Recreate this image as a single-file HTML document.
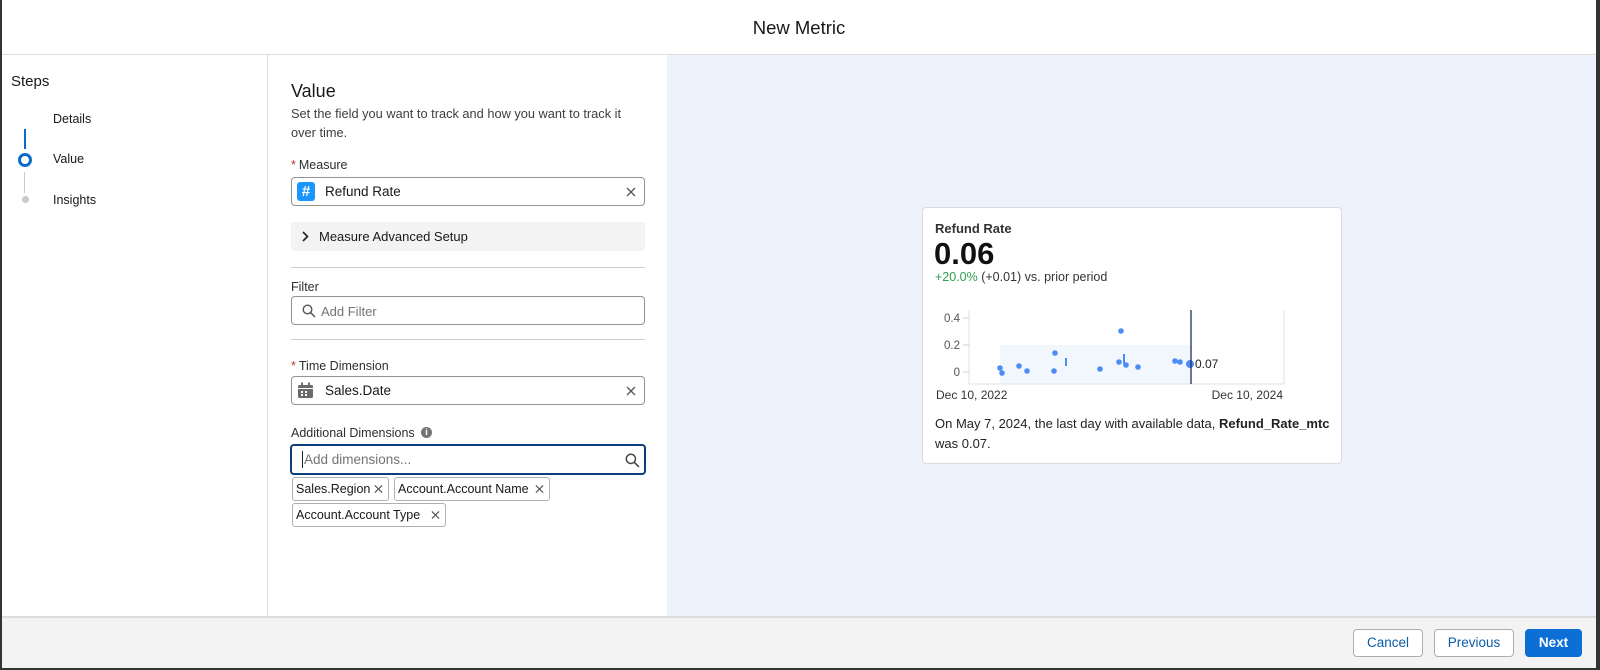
<!DOCTYPE html>
<html><head><meta charset="utf-8"><style>
*{box-sizing:border-box;margin:0;padding:0}
body{width:1600px;height:670px;overflow:hidden;background:#fff;font-family:"Liberation Sans",Arial,sans-serif;color:#181818;position:relative}
.a{position:absolute}
.lbl{font-size:12.5px;color:#2e2e2e}
.req{color:#c23934;margin-right:3px}
.box{position:absolute;left:291px;width:354px;border:1px solid #939393;border-radius:4px;background:#fff}
.pill{position:absolute;height:24px;border:1px solid #b0b0b0;border-radius:3px;font-size:12.5px;line-height:22px;padding-left:3px;background:#fff;white-space:nowrap}
.x{position:absolute;right:8px;top:50%;transform:translateY(-50%)}
.pill .x{right:5px}
.btn{position:absolute;top:629px;height:28px;border:1px solid #aeaeae;border-radius:4px;background:#fff;color:#0b5cab;font-size:13.5px;text-align:center;line-height:26px}
</style></head><body>
<div class="a" style="left:0;top:0;width:2px;height:670px;background:#333"></div>
<div class="a" style="left:1596px;top:0;width:4px;height:670px;background:#333"></div>
<div class="a" style="left:0;top:668px;width:1600px;height:2px;background:#333"></div>
<div class="a" style="left:2px;top:0;width:1594px;height:55px;border-bottom:1px solid #ddd;text-align:center;font-size:18.5px;line-height:56px;color:#181818">New Metric</div>
<div class="a" style="left:267px;top:55px;width:1px;height:561px;background:#ddd"></div>
<div class="a" style="left:11px;top:73px;font-size:15px">Steps</div>
<div class="a" style="left:53px;top:112px;font-size:12.5px">Details</div>
<div class="a" style="left:53px;top:152px;font-size:12.5px">Value</div>
<div class="a" style="left:53px;top:193px;font-size:12.5px">Insights</div>
<div class="a" style="left:24px;top:129px;width:2px;height:20px;background:#0b6bcb"></div>
<div class="a" style="left:18px;top:153px;width:14px;height:14px;border:3px solid #0b6bcb;border-radius:50%"></div>
<div class="a" style="left:24px;top:172px;width:1px;height:21px;background:#c9c9c9"></div>
<div class="a" style="left:22px;top:196px;width:7px;height:7px;border-radius:50%;background:#c9c9c9"></div>
<div class="a" style="left:291px;top:81px;font-size:18px">Value</div>
<div class="a" style="left:291px;top:104px;width:345px;font-size:12.8px;line-height:19px;color:#3e3e3c">Set the field you want to track and how you want to track it over time.</div>
<div class="a lbl" style="left:291px;top:158px"><span class="req">*</span>Measure</div>
<div class="box" style="top:177px;height:29px">
 <div class="a" style="left:5px;top:4px;width:18px;height:19px;background:#1b96ff;border-radius:3px;color:#fff;font-weight:bold;font-size:15px;line-height:19px;text-align:center">#</div>
 <div class="a" style="left:33px;top:6px;font-size:13.5px">Refund Rate</div>
 <svg class="x" width="10" height="10" viewBox="0 0 10 10"><path d="M1 1L9 9M9 1L1 9" stroke="#555" stroke-width="1.3"/></svg>
</div>
<div class="a" style="left:291px;top:222px;width:354px;height:29px;background:#f3f3f3;border-radius:3px">
 <svg class="a" style="left:11px;top:9px" width="7" height="11" viewBox="0 0 7 11"><path d="M1 1L5.5 5.5L1 10" stroke="#222" stroke-width="1.6" fill="none"/></svg>
 <div class="a" style="left:28px;top:7px;font-size:13px">Measure Advanced Setup</div>
</div>
<div class="a" style="left:291px;top:267px;width:354px;height:1px;background:#ccc"></div>
<div class="a lbl" style="left:291px;top:280px">Filter</div>
<div class="box" style="top:296px;height:29px">
 <svg class="a" style="left:10px;top:7px" width="14" height="14" viewBox="0 0 14 14"><circle cx="5.5" cy="5.5" r="4.3" stroke="#555" stroke-width="1.4" fill="none"/><path d="M8.7 8.7L13 13" stroke="#555" stroke-width="1.5"/></svg>
 <div class="a" style="left:29px;top:7px;font-size:13px;color:#747474">Add Filter</div>
</div>
<div class="a" style="left:291px;top:339px;width:354px;height:1px;background:#ccc"></div>
<div class="a lbl" style="left:291px;top:359px"><span class="req">*</span>Time Dimension</div>
<div class="box" style="top:376px;height:29px">
 <svg class="a" style="left:5px;top:5px" width="17" height="17" viewBox="0 0 17 17"><rect x="1" y="3" width="15" height="13" rx="1.5" fill="#6b6b6b"/><rect x="4" y="0.5" width="2" height="4" fill="#6b6b6b"/><rect x="11" y="0.5" width="2" height="4" fill="#6b6b6b"/><rect x="1" y="6" width="15" height="1" fill="#fff"/><rect x="4" y="9" width="2" height="2" fill="#fff"/><rect x="8" y="9" width="2" height="2" fill="#fff"/><rect x="4" y="12" width="2" height="2" fill="#fff"/><rect x="8" y="12" width="2" height="2" fill="#fff"/></svg>
 <div class="a" style="left:33px;top:6px;font-size:13.5px">Sales.Date</div>
 <svg class="x" width="10" height="10" viewBox="0 0 10 10"><path d="M1 1L9 9M9 1L1 9" stroke="#555" stroke-width="1.3"/></svg>
</div>
<div class="a lbl" style="left:291px;top:426px">Additional Dimensions</div>
<div class="a" style="left:421px;top:427px;width:11px;height:11px;border-radius:50%;background:#747474;color:#fff;font-size:9px;font-weight:bold;text-align:center;line-height:11px">i</div>
<div class="a" style="left:290px;top:444px;width:356px;height:31px;border:2px solid #0b3f7b;border-radius:4px;background:#fff">
 <div class="a" style="left:10px;top:5px;width:1px;height:17px;background:#222"></div>
 <div class="a" style="left:12px;top:6px;font-size:13.5px;color:#747474">Add dimensions...</div>
 <svg class="a" style="left:333px;top:7px" width="15" height="15" viewBox="0 0 14 14"><circle cx="5.5" cy="5.5" r="4.3" stroke="#444" stroke-width="1.4" fill="none"/><path d="M8.7 8.7L13 13" stroke="#444" stroke-width="1.5"/></svg>
</div>
<div class="pill" style="left:292px;top:477px;width:97px">Sales.Region<svg class="x" width="9" height="9" viewBox="0 0 10 10"><path d="M1 1L9 9M9 1L1 9" stroke="#555" stroke-width="1.3"/></svg></div>
<div class="pill" style="left:394px;top:477px;width:156px">Account.Account Name<svg class="x" width="9" height="9" viewBox="0 0 10 10"><path d="M1 1L9 9M9 1L1 9" stroke="#555" stroke-width="1.3"/></svg></div>
<div class="pill" style="left:292px;top:503px;width:154px">Account.Account Type<svg class="x" width="9" height="9" viewBox="0 0 10 10"><path d="M1 1L9 9M9 1L1 9" stroke="#555" stroke-width="1.3"/></svg></div>
<div class="a" style="left:667px;top:55px;width:929px;height:561px;background:#eef2fd"></div>
<div class="a" style="left:922px;top:207px;width:420px;height:257px;background:#fff;border:1px solid #d8dbe0;border-radius:4px"></div>
<div class="a" style="left:935px;top:221px;font-size:13px;font-weight:bold;color:#333">Refund Rate</div>
<div class="a" style="left:934px;top:236px;font-size:31px;font-weight:bold;color:#111">0.06</div>
<div class="a" style="left:935px;top:270px;font-size:12.5px;color:#333"><span style="color:#2e9e50">+20.0%</span> (+0.01) vs. prior period</div>
<svg class="a" style="left:920px;top:300px" width="400" height="110" viewBox="920 300 400 110">
 <rect x="1000" y="345" width="191" height="39" fill="#f2f6fd"/>
 <path d="M969 310V384H1284V310" stroke="#e2e2e2" fill="none"/>
 <path d="M963 318H969M963 345H969M963 372H969" stroke="#ccc"/>
 <g font-family="Liberation Sans, Arial" font-size="11.5" fill="#555" text-anchor="end"><text x="960" y="322">0.4</text><text x="960" y="349">0.2</text><text x="960" y="376">0</text></g>
 <g fill="#4b8cf5"><circle cx="1000" cy="368" r="2.8"/><circle cx="1002" cy="373" r="2.8"/><circle cx="1019" cy="366" r="2.8"/><circle cx="1027" cy="371" r="2.8"/><circle cx="1054" cy="371" r="2.8"/><circle cx="1055" cy="353" r="2.8"/><circle cx="1100" cy="369" r="2.8"/><circle cx="1119" cy="362" r="2.8"/><circle cx="1121" cy="331" r="2.8"/><circle cx="1126" cy="365" r="2.8"/><circle cx="1138" cy="367" r="2.8"/><circle cx="1175" cy="361" r="2.8"/><circle cx="1180" cy="362" r="2.8"/><circle cx="1190" cy="364" r="4"/></g>
 <path d="M1066 358V366M1124 354V364" stroke="#4b8cf5" stroke-width="2"/>
 <path d="M1191 310V384" stroke="#1d2f5a" stroke-width="1.3"/>
 <text x="1195" y="368" font-family="Liberation Sans, Arial" font-size="12" fill="#222">0.07</text>
 <g font-family="Liberation Sans, Arial" font-size="12" fill="#333"><text x="936" y="399">Dec 10, 2022</text><text x="1283" y="399" text-anchor="end">Dec 10, 2024</text></g>
</svg>
<div class="a" style="left:935px;top:414px;width:405px;font-size:13px;line-height:20px;color:#222;white-space:nowrap">On May 7, 2024, the last day with available data, <b>Refund_Rate_mtc</b><br>was 0.07.</div>
<div class="a" style="left:2px;top:616px;width:1594px;height:52px;background:#f3f3f3;border-top:2px solid #ddd"></div>
<div class="btn" style="left:1353px;width:70px">Cancel</div>
<div class="btn" style="left:1434px;width:80px">Previous</div>
<div class="btn" style="left:1525px;width:57px;background:#0b6fd6;border-color:#0b6fd6;color:#fff;font-weight:bold">Next</div>
</body></html>
